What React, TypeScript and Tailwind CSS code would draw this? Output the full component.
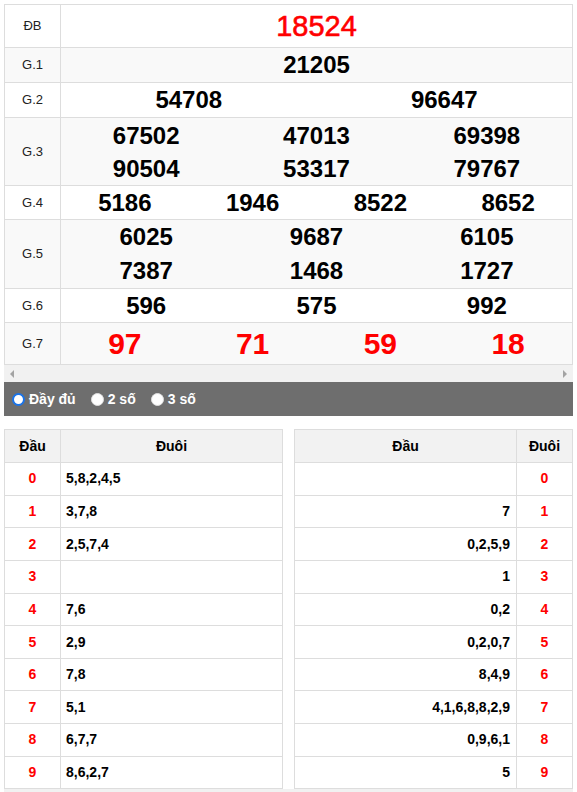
import React from "react";

const rows: { label: string; cols: string[][]; h: string; bg: string; kind: "db" | "n" | "g7"; lh?: string }[] = [
  { label: "ĐB", cols: [["18524"]], h: "h-[43px]", bg: "bg-white", kind: "db" },
  { label: "G.1", cols: [["21205"]], h: "h-[35px]", bg: "bg-[#f9f9f9]", kind: "n" },
  { label: "G.2", cols: [["54708"], ["96647"]], h: "h-[35px]", bg: "bg-white", kind: "n" },
  { label: "G.3", cols: [["67502", "90504"], ["47013", "53317"], ["69398", "79767"]], h: "h-[68px]", bg: "bg-[#f9f9f9]", kind: "n", lh: "leading-[33px]" },
  { label: "G.4", cols: [["5186"], ["1946"], ["8522"], ["8652"]], h: "h-[34px]", bg: "bg-white", kind: "n" },
  { label: "G.5", cols: [["6025", "7387"], ["9687", "1468"], ["6105", "1727"]], h: "h-[69px]", bg: "bg-[#f9f9f9]", kind: "n", lh: "leading-[34px]" },
  { label: "G.6", cols: [["596"], ["575"], ["992"]], h: "h-[34px]", bg: "bg-white", kind: "n" },
  { label: "G.7", cols: [["97"], ["71"], ["59"], ["18"]], h: "h-[42px]", bg: "bg-[#f9f9f9]", kind: "g7" },
];

const dau = ["5,8,2,4,5", "3,7,8", "2,5,7,4", "", "7,6", "2,9", "7,8", "5,1", "6,7,7", "8,6,2,7"];
const duoi = ["", "7", "0,2,5,9", "1", "0,2", "0,2,0,7", "8,4,9", "4,1,6,8,8,2,9", "0,9,6,1", "5"];

function Radio({ checked, label }: { checked?: boolean; label: string }) {
  return (
    <div className="flex items-center">
      <span
        className={
          checked
            ? "w-[13px] h-[13px] rounded-full border-2 border-[#1a73e8] bg-white"
            : "w-[13px] h-[13px] rounded-full bg-white border border-[#e0e0e0]"
        }
      />
      <span className="ml-[4px] text-[14px] font-bold text-white">{label}</span>
    </div>
  );
}

export default function App() {
  return (
    <div className="p-1 bg-white font-['Liberation_Sans',Arial,sans-serif] text-black">
      <div className="border-t border-l border-[#dddddd]">
        {rows.map((r) => (
          <div key={r.label} className={`flex border-b border-[#dddddd] ${r.h} ${r.bg}`}>
            <div className="w-[56px] shrink-0 border-r border-[#dddddd] flex items-center justify-center text-[13px] text-[#222]">
              {r.label}
            </div>
            <div className="flex-1 flex border-r border-[#dddddd]">
              {r.cols.map((c, i) => (
                <div key={i} className="flex-1 flex flex-col items-center justify-center">
                  {c.map((n) => (
                    <div
                      key={n}
                      className={
                        r.kind === "db"
                          ? "text-[29px] text-[#ff0000] leading-none [-webkit-text-stroke:0.6px_#ff0000]"
                          : r.kind === "g7"
                          ? "text-[30px] font-bold text-[#ff0000] leading-none"
                          : `text-[24px] font-bold ${r.lh ?? "leading-none"}`
                      }
                    >
                      {n}
                    </div>
                  ))}
                </div>
              ))}
            </div>
          </div>
        ))}
      </div>
      <div className="h-[17px] bg-[#f1f1f1] flex items-center justify-between px-[6px]">
        <svg width="5" height="8" viewBox="0 0 5 8">
          <path d="M4 0 L0 4 L4 8 Z" fill="#a3a3a3" />
        </svg>
        <svg width="5" height="8" viewBox="0 0 5 8">
          <path d="M1 0 L5 4 L1 8 Z" fill="#a3a3a3" />
        </svg>
      </div>
      <div className="h-[34px] bg-[#6e6e6e] flex items-center pl-[8px] gap-[15px]">
        <Radio checked label="Đầy đủ" />
        <Radio label="2 số" />
        <Radio label="3 số" />
      </div>
      <div className="mt-[13px] grid grid-cols-2 gap-[11px]">
        <div className="border-t border-l border-[#dddddd]">
          <div className="flex h-[33px] bg-[#f2f2f2] border-b border-[#dddddd] text-[14px] font-bold">
            <div className="w-[56px] shrink-0 border-r border-[#dddddd] flex items-center justify-center">Đầu</div>
            <div className="flex-1 border-r border-[#dddddd] flex items-center justify-center">Đuôi</div>
          </div>
          {dau.map((v, i) => (
            <div key={i} className="flex h-[32.65px] border-b border-[#dddddd] text-[14px] font-bold">
              <div className="w-[56px] shrink-0 border-r border-[#dddddd] flex items-center justify-center text-[#ff0000]">{i}</div>
              <div className="flex-1 border-r border-[#dddddd] flex items-center pl-[5px]">{v}</div>
            </div>
          ))}
        </div>
        <div className="border-t border-l border-[#dddddd]">
          <div className="flex h-[33px] bg-[#f2f2f2] border-b border-[#dddddd] text-[14px] font-bold">
            <div className="flex-1 border-r border-[#dddddd] flex items-center justify-center">Đầu</div>
            <div className="w-[56px] shrink-0 border-r border-[#dddddd] flex items-center justify-center">Đuôi</div>
          </div>
          {duoi.map((v, i) => (
            <div key={i} className="flex h-[32.65px] border-b border-[#dddddd] text-[14px] font-bold">
              <div className="flex-1 border-r border-[#dddddd] flex items-center justify-end pr-[6px]">{v}</div>
              <div className="w-[56px] shrink-0 border-r border-[#dddddd] flex items-center justify-center text-[#ff0000]">{i}</div>
            </div>
          ))}
        </div>
      </div>
      <div className="h-[10px] bg-[#f1f1f1]" />
    </div>
  );
}
